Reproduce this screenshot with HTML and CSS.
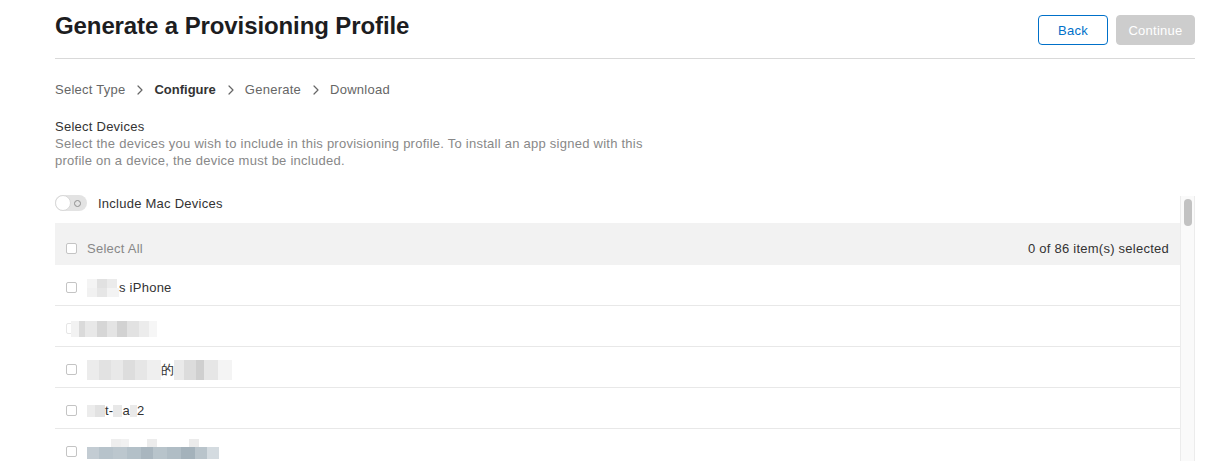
FILE: index.html
```html
<!DOCTYPE html>
<html lang="en">
<head>
<meta charset="utf-8">
<title>Generate a Provisioning Profile</title>
<link rel="stylesheet" href="styles.css">
</head>
<body>
<div class="page">
  <header class="topbar">
    <h1 class="title">Generate a Provisioning Profile</h1>
    <div class="actions">
      <button class="btn btn-back" type="button">Back</button>
      <button class="btn btn-continue" type="button" disabled>Continue</button>
    </div>
  </header>

  <nav class="steps">
    <span class="step">Select Type</span>
    <svg class="chev" width="6" height="10" viewBox="0 0 6 10"><path d="M1 1l4 4-4 4" fill="none" stroke="#666" stroke-width="1.2" stroke-linecap="round" stroke-linejoin="round"/></svg>
    <span class="step step-current">Configure</span>
    <svg class="chev" width="6" height="10" viewBox="0 0 6 10"><path d="M1 1l4 4-4 4" fill="none" stroke="#666" stroke-width="1.2" stroke-linecap="round" stroke-linejoin="round"/></svg>
    <span class="step">Generate</span>
    <svg class="chev" width="6" height="10" viewBox="0 0 6 10"><path d="M1 1l4 4-4 4" fill="none" stroke="#666" stroke-width="1.2" stroke-linecap="round" stroke-linejoin="round"/></svg>
    <span class="step">Download</span>
  </nav>

  <section class="intro">
    <h2 class="intro-title">Select Devices</h2>
    <p class="intro-text">Select the devices you wish to include in this provisioning profile. To install an app signed with this profile on a device, the device must be included.</p>
  </section>

  <div class="devices">
    <div class="devices-main">
      <div class="toggle-row">
        <span class="toggle"><span class="knob"></span><span class="ring"></span></span>
        <span class="toggle-label">Include Mac Devices</span>
      </div>
      <div class="list">
        <div class="list-head">
          <span class="check"></span>
          <span class="select-all">Select All</span>
          <span class="count">0 of 86 item(s) selected</span>
        </div>
        <div class="row">
          <span class="check"></span>
          <span class="name"><span class="mosaic mz-1"></span>s iPhone</span>
        </div>
        <div class="row">
          <span class="check check-hidden"></span>
          <span class="name"><span class="mosaic mz-2"></span></span>
        </div>
        <div class="row">
          <span class="check"></span>
          <span class="name"><span class="mosaic mz-3a"></span>的<span class="mosaic mz-3b"></span></span>
        </div>
        <div class="row">
          <span class="check"></span>
          <span class="name"><span class="mosaic mz-4a"></span>t-<span class="mosaic mz-4b"></span>a<span class="mosaic mz-4c"></span> 2</span>
        </div>
        <div class="row">
          <span class="check"></span>
          <span class="name"><span class="mosaic mz-5"></span></span>
        </div>
      </div>
    </div>
    <div class="scrollbar"><div class="thumb"></div></div>
  </div>
</div>
</body>
</html>
```

FILE: styles.css
```css
html, body {
  margin: 0;
  padding: 0;
  height: 100%;
  overflow: hidden;
  background: #fff;
}

body {
  font-family: "Liberation Sans", Arial, sans-serif;
  font-size: 13px;
  letter-spacing: 0.25px;
  color: #333;
}

.page {
  padding: 0 14px 0 55px;
}

/* header */
.topbar {
  display: flex;
  justify-content: space-between;
  align-items: flex-start;
  height: 58px;
  border-bottom: 1px solid #d9d9d9;
}

.title {
  margin: 11px 0 0;
  font-size: 24px;
  line-height: 30px;
  font-weight: 700;
  color: #1d1d1f;
  letter-spacing: -0.1px;
}

.actions {
  display: flex;
  gap: 8px;
  margin-top: 15px;
}

.btn {
  height: 30px;
  border-radius: 4px;
  font-family: inherit;
  font-size: 13px;
  letter-spacing: inherit;
  padding: 0;
  box-sizing: border-box;
}

.btn-back {
  width: 70px;
  background: #fff;
  border: 1px solid #0070c9;
  color: #0070c9;
}

.btn-continue {
  width: 79px;
  background: #cdcdcd;
  border: 1px solid #cdcdcd;
  color: #fff;
}

/* breadcrumb */
.steps {
  display: flex;
  align-items: center;
  margin-top: 22px;
  height: 18px;
  line-height: 18px;
  color: #666;
}

.chev {
  margin: 0 11px 0 12px;
}

.step-current {
  font-weight: 700;
  color: #333;
  letter-spacing: 0;
}

/* intro */
.intro {
  margin-top: 19px;
}

.intro-title {
  margin: 0;
  font-size: 13px;
  font-weight: 400;
  line-height: 17px;
  color: #333;
}

.intro-text {
  margin: 0;
  max-width: 610px;
  line-height: 17px;
  color: #888;
}

/* devices */
.devices {
  display: flex;
  margin-top: 24px;
}

.devices-main {
  flex: 1;
}

.toggle-row {
  display: flex;
  align-items: center;
  gap: 11px;
  height: 16px;
  padding-top: 2px;
  margin-bottom: 12px;
}

.toggle {
  display: flex;
  align-items: center;
  justify-content: space-between;
  width: 32px;
  height: 16px;
  border-radius: 8px;
  background: #e3e3e3;
  box-sizing: border-box;
}

.knob {
  width: 16px;
  height: 16px;
  border-radius: 50%;
  background: #fff;
  box-sizing: border-box;
  border: 1px solid #d8d8d8;
}

.ring {
  width: 5px;
  height: 5px;
  border-radius: 50%;
  border: 1px solid #8f8f8f;
  margin-right: 6px;
}

.toggle-label {
  color: #333;
}

.list-head {
  display: flex;
  align-items: center;
  height: 42px;
  box-sizing: border-box;
  padding: 8px 11px 0;
  background: #f2f2f2;
}

.select-all {
  color: #888;
  flex: 1;
}

.count {
  color: #333;
}

.row {
  display: flex;
  align-items: center;
  height: 41px;
  box-sizing: border-box;
  padding: 5px 11px 0;
  border-bottom: 1px solid #e8e8e8;
}

.check {
  width: 11px;
  height: 11px;
  box-sizing: border-box;
  border: 1px solid #c4c4c4;
  border-radius: 2px;
  background: #fff;
  margin-right: 10px;
  flex: none;
}

.check-hidden {
  border-color: #e6e6e6;
}

.name {
  display: flex;
  align-items: center;
  color: #333;
}

.mosaic {
  display: inline-block;
  flex: none;
}

.mz-1 {
  width: 32px;
  height: 18px;
  background:
    linear-gradient(90deg, #f4f4f4 0 10px, #e1e1e1 10px 20px, #ebebeb 20px 30px, transparent 30px) top / 100% 9px no-repeat,
    linear-gradient(90deg, #f1f1f1 0 10px, #e6e6e6 10px 20px, #f3f3f3 20px 32px) bottom / 100% 9px no-repeat;
}

.mz-2 {
  width: 86px;
  height: 16px;
  margin-left: -16px;
  background:
    linear-gradient(90deg, #f2f2f2 0 8px, #dadada 8px 14px, #e8e8e8 14px 26px, #d6d6d6 26px 36px, #e4e4e4 36px 46px, #d2d2d2 46px 56px, #e2e2e2 56px 68px, #ececec 68px 78px, #f6f6f6 78px 86px);
}

.mz-3a {
  width: 74px;
  height: 20px;
  background:
    linear-gradient(90deg, #ececec 0 12px, #e2e2e2 12px 24px, #e9e9e9 24px 36px, #dddddd 36px 48px, #e6e6e6 48px 60px, #efefef 60px 74px);
}

.mz-3b {
  width: 58px;
  height: 20px;
  background:
    linear-gradient(90deg, #eaeaea 0 10px, #dcdcdc 10px 22px, #cfcfcf 22px 30px, #e6e6e6 30px 44px, #f4f4f4 44px 58px);
}

.mz-4a {
  width: 18px;
  height: 12px;
  background: linear-gradient(90deg, #ececec 0 8px, #e2e2e2 8px 18px);
}

.mz-4b {
  width: 9px;
  height: 12px;
  background: #e8e8e8;
}

.mz-4c {
  width: 7px;
  height: 12px;
  background: #eaeaea;
}

.mz-5 {
  width: 132px;
  height: 20px;
  margin-top: -6px;
  background:
    linear-gradient(90deg, transparent 0 24px, #eeeeee 24px 34px, #f1f1f1 34px 42px, transparent 42px 60px, #ececec 60px 70px, transparent 70px 102px, #ebebeb 102px 112px, transparent 112px) top / 100% 8px no-repeat,
    linear-gradient(90deg, #c3ccd3 0 12px, #b7c3cb 12px 26px, #bcc7ce 26px 40px, #b3c0c8 40px 54px, #a9b6bf 54px 66px, #b8c4cb 66px 80px, #b0bdc5 80px 94px, #a4b2bb 94px 108px, #b9c4cb 108px 120px, #d4dbe0 120px 132px) bottom / 100% 12px no-repeat;
}

/* scrollbar */
.scrollbar {
  width: 15px;
  margin-top: 3px;
  box-sizing: border-box;
  border-left: 1px solid #ececec;
  border-right: 1px solid #ececec;
  background: #fafafa;
  display: flex;
  justify-content: center;
  align-items: flex-start;
}

.thumb {
  width: 8px;
  height: 27px;
  margin-top: 3px;
  border-radius: 4px;
  background: #c2c2c2;
}
```
